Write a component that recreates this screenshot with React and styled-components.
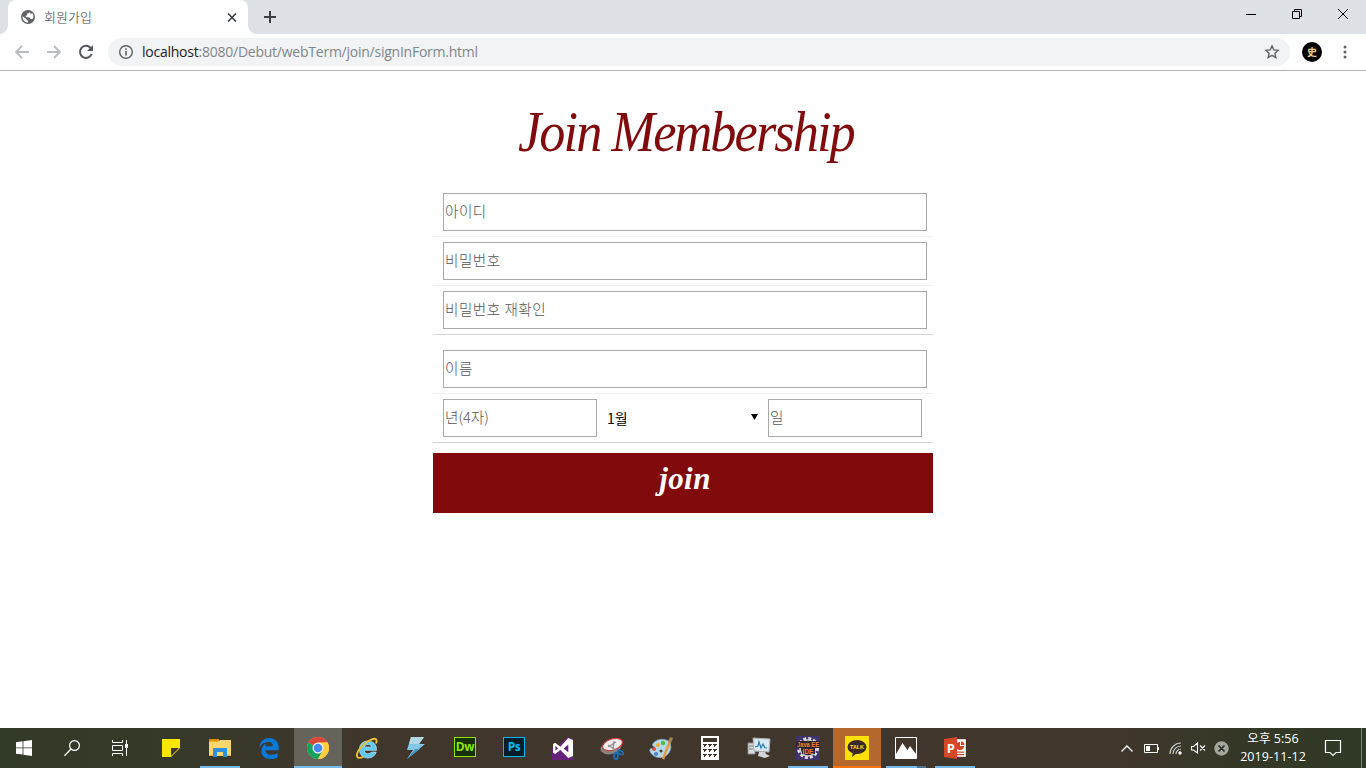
import React from "react";
import styled, { createGlobalStyle } from "styled-components";

const KR = `"Noto Sans", "Noto Sans CJK KR", sans-serif`;

const GlobalStyle = createGlobalStyle`
  * { box-sizing: border-box; }
  body { margin: 0; background: #fff; overflow: hidden; }
`;

const Screen = styled.div`
  width: 1366px;
  height: 768px;
  display: flex;
  flex-direction: column;
  font-family: ${KR};
`;

/* ---------- browser chrome ---------- */
const TabStrip = styled.header`
  height: 34px;
  flex: none;
  display: flex;
  background: #dee1e6;
  padding-left: 8px;
`;
const Tab = styled.div`
  position: relative;
  width: 240px;
  height: 34px;
  background: #fff;
  border-radius: 8px 8px 0 0;
  display: flex;
  align-items: center;
  padding: 0 10px 0 12px;
  &::before, &::after {
    content: "";
    position: absolute;
    bottom: 0;
    width: 8px;
    height: 8px;
  }
  &::before { left: -8px; background: radial-gradient(circle at 0 0, transparent 7.5px, #fff 8px); }
  &::after { right: -8px; background: radial-gradient(circle at 100% 0, transparent 7.5px, #fff 8px); }
`;
const TabTitle = styled.span`
  flex: 1;
  margin-left: 8px;
  font: 300 13px/16px "Noto Sans CJK KR", sans-serif;
  color: #3c4043;
`;
const NewTab = styled.div`
  width: 28px;
  margin-left: 8px;
  display: flex;
  align-items: center;
  justify-content: center;
`;
const WindowButtons = styled.div`
  margin-left: auto;
  display: flex;
  height: 28px;
`;
const WindowButton = styled.div`
  width: 46px;
  display: flex;
  align-items: center;
  justify-content: center;
`;
const Toolbar = styled.div`
  height: 37px;
  flex: none;
  display: flex;
  align-items: center;
  border-bottom: 1px solid #b4b4b4;
  padding: 0 6px;
`;
const ToolButton = styled.div`
  width: 32px;
  height: 28px;
  display: flex;
  align-items: center;
  justify-content: center;
`;
const AddressBar = styled.div`
  width: 1182px;
  height: 28px;
  margin-left: 6px;
  border-radius: 14px;
  background: #f1f3f4;
  display: flex;
  align-items: center;
  padding: 0 10px;
`;
const Url = styled.span`
  flex: 1;
  margin-left: 8px;
  font: 14px/20px "Open Sans", sans-serif;
  letter-spacing: -0.24px;
  color: #80868b;
  b { font-weight: 400; color: #202124; }
`;
const Avatar = styled.div`
  width: 20px;
  height: 20px;
  margin: 0 12px;
  border-radius: 50%;
  background: #000;
  color: #e8d08c;
  font: 700 10px/19px "Noto Sans CJK KR", sans-serif;
  text-align: center;
`;
const Menu = styled.div`
  flex: 1;
  display: flex;
  justify-content: center;
  padding-right: 5px;
`;

/* ---------- sign-up page ---------- */
const Page = styled.main`
  flex: 1;
  display: flex;
  flex-direction: column;
  align-items: center;
`;
const Title = styled.h1`
  height: 117px;
  margin: 0;
  padding-top: 28px;
  font: italic 400 57px/66px "Liberation Serif", serif;
  letter-spacing: -2.1px;
  color: #800a0c;
  white-space: nowrap;
  transform: translateX(3px) scaleX(0.918);
`;
const Form = styled.form`
  width: 500px;
  display: flex;
  flex-direction: column;
  gap: 10px;
`;
const Group = styled.div`
  border-bottom: 1px solid #d5d5d5;
`;
const Row = styled.div`
  display: flex;
  height: ${(p) => (p.$last ? 48 : 49)}px;
  padding: 5px 6px 5px 10px;
  border-bottom: ${(p) => (p.$last ? "none" : "1px solid #f0f0f0")};
`;
const Input = styled.input`
  width: ${(p) => p.$width || 484}px;
  height: 38px;
  padding: 0 1px 3px;
  border: 1px solid #a9a9a9;
  outline: none;
  font: 300 14.6px/20px "Noto Sans CJK KR", sans-serif;
  letter-spacing: 0.5px;
  &::placeholder { color: #555; opacity: 1; letter-spacing: ${(p) => (p.$tight ? 0 : 0.5)}px; }
`;
const Month = styled.div`
  width: 171px;
  padding: 0 10px;
  display: flex;
  align-items: center;
  justify-content: space-between;
  font: 400 14px/20px "Noto Sans CJK KR", sans-serif;
  color: #000;
  svg { margin-bottom: 2px; }
`;
const JoinButton = styled.button`
  height: 60px;
  padding: 0 0 8px 4px;
  border: 0;
  background: #800a0c;
  color: #fff;
  font: italic 700 31px/40px "Liberation Serif", serif;
  letter-spacing: 0.4px;
`;

/* ---------- taskbar ---------- */
const Taskbar = styled.footer`
  height: 40px;
  flex: none;
  display: flex;
  background: linear-gradient(90deg, #323b27 0, #343a28 150px, #3b382b 260px, #40362c 400px, #40362c 1120px, #363827 1230px, #2f3a26 1366px);
`;
const SystemSlots = styled.div`
  display: flex;
  width: 147px;
`;
const Apps = styled.div`
  display: flex;
  gap: 1px;
`;
const Slot = styled.div`
  position: relative;
  width: 48px;
  height: 40px;
  display: flex;
  align-items: center;
  justify-content: center;
  background: ${(p) => p.$bg || "transparent"};
  &::after {
    content: "";
    position: absolute;
    bottom: 0;
    height: 2px;
    left: ${(p) => (p.$bg ? 0 : 4)}px;
    right: ${(p) => (p.$bg ? 0 : 4)}px;
    background: ${(p) => p.$line || "transparent"};
  }
`;
const AdobeTile = styled.span`
  width: 22px;
  height: 20px;
  margin-bottom: 2px;
  border: 1px solid ${(p) => p.$color};
  background: ${(p) => p.$fill};
  color: ${(p) => p.$color};
  font: 700 12px/17px "Open Sans", sans-serif;
  letter-spacing: -0.4px;
  text-align: center;
`;
const Tray = styled.div`
  margin-left: auto;
  display: flex;
  align-items: center;
`;
const TrayItem = styled.div`
  width: ${(p) => p.$width}px;
  display: flex;
  justify-content: center;
`;
const Clock = styled.div`
  width: 78px;
  color: #fff;
  text-align: center;
  font: 400 12.5px/18px "Open Sans", "Noto Sans CJK KR", sans-serif;
  letter-spacing: 0.05px;
  padding-bottom: 1px;
`;
const Notifications = styled.div`
  width: 49px;
  padding: 0 6px 0 0;
  display: flex;
  justify-content: center;
`;
const ShowDesktop = styled.div`
  width: 5px;
  height: 40px;
  border-left: 1px solid #7c8374;
`;

const Svg = ({ w = 24, h = w, box, children, ...rest }) => (
  <svg width={w} height={h} viewBox={box || `0 0 ${w} ${h}`} fill="none" overflow="visible" {...rest}>
    {children}
  </svg>
);

const Globe = () => (
  <Svg w={16}>
    <circle cx="8" cy="8" r="7" fill="#5f6368" />
    <path d="M2.400 7.200 5.600 9.400 6.400 10.600 8.300 12 7.900 13.500C4.800 13.400 2.500 10.900 2.400 7.200ZM9.800 2.600 9.600 3.900 7.300 4.300 7 6.200 5.500 7 6.300 8.200 9.200 8.300 10.600 10 12.600 10.100C13.900 8.300 13.800 5.300 12 3.700L10.900 5.600Z" fill="#fff" />
  </Svg>
);
const Folder = () => (
  <Svg w={22} h={20}>
    <path d="M0 1h10v4H0z" fill="#d99000" />
    <path d="M0 3.500h9L11 2h11v16H0z" fill="#fbd66f" />
    <path d="M4 10h14v9h-4v-5H8v5H4z" fill="#2f91dd" />
    <path d="M0 17h4v1H0zM18 17h4v1h-4z" fill="#e9ad3a" />
  </Svg>
);
const Edge = () => (
  <Svg w={20} h={21}>
    <path d="M.2 9.400C1.200 3.300 5 0 10.200 0 16.100 0 19.800 4.200 19.800 9.900v2.300H6.500c.1 3.200 2.800 4.500 6 4.500 2.200 0 4.200-.6 6-1.600v4.300c-1.900 1-4.300 1.600-7 1.600-5.600 0-9.200-3.200-9.200-7.900 0-3.500 2-6.400 5.200-7.800-.7.8-1 1.800-1.100 2.900h7.400c0-2.600-1.500-4.100-4.200-4.100C6 4.100 2.600 5.900.2 9.400Z" fill="#0a78d7" />
  </Svg>
);
const Chrome = () => (
  <Svg w={22} box="0 0 24 24">
    <circle cx="12" cy="12" r="12" fill="#ffcd46" />
    <path d="M12 12 1.600 6A12 12 0 0 1 22.400 6H12Z" fill="#dc4437" />
    <path d="M12 12 1.600 6A12 12 0 0 0 12 24L17.200 15Z" fill="#18a05e" />
    <path d="M12 6H22.400A12 12 0 0 1 12 24l5.200-9Z" fill="#ffcd46" />
    <circle cx="12" cy="12" r="6" fill="#f4f4f4" />
    <circle cx="12" cy="12" r="4.700" fill="#4587f3" />
  </Svg>
);
const Explorer = () => (
  <Svg w={22} h={23}>
    <path fillRule="evenodd" d="M20.500 13.300H8.200c.2 2.400 1.700 3.400 3.700 3.400 1.600 0 2.700-.6 3.500-1.600h4.800C19 18.900 16 21 12 21c-5 0-8.600-3.400-8.600-8.500S7 4 12 4c5.300 0 8.800 3.700 8.500 9.300ZM8.300 10h7.500c-.3-1.700-1.700-2.600-3.700-2.600S8.700 8.300 8.300 10Z" fill="#61c9ef" stroke="#b5eafb" strokeWidth=".7" />
    <path d="M20 6.500C21.600 2.700 20 .8 15.700 2.400 9 5 1.500 12.500.9 17.800c-.3 3.700 3 3.800 6.500 1.700" stroke="#f2be2c" strokeWidth="1.900" />
  </Svg>
);
const VisualStudio = () => (
  <Svg w={22} h={23}>
    <path d="M15.500 0 22 2.500V23H0V11h4Z" fill="#68217a" />
    <path fillRule="evenodd" d="m1 7 2.200-1.300L8.400 9.800 16.300 1 21 3v16l-4.700 2-7.900-8.100-5.200 4L1 15.700Zm2.400 2v4.800l2.600-2.500Zm12.900-1.500-4.700 3.900 4.700 3.900Z" fill="#fff" />
  </Svg>
);
const Snip = () => (
  <Svg w={24} h={23}>
    <ellipse cx="11" cy="10.500" rx="10.700" ry="6.500" transform="rotate(-15 11 10.500)" fill="#858481" />
    <ellipse cx="12.500" cy="7.500" rx="10.300" ry="5.500" transform="rotate(-18 12.500 7.500)" fill="#f3eeee" stroke="#ce4140" strokeWidth="1.200" />
    <path d="m8 10 8-5M14 4l-1 8M8 8l8 5" stroke="#8b8d8f" strokeWidth="1.200" />
    <ellipse cx="16" cy="19" rx="2" ry="3" stroke="#1970bd" strokeWidth="1.800" />
    <ellipse cx="20.500" cy="15.500" rx="3" ry="1.700" transform="rotate(25 20.500 15.500)" stroke="#1970bd" strokeWidth="1.700" />
  </Svg>
);
const Paint = () => (
  <Svg w={24} h={24}>
    <path d="M3 9C6 3 15 1.500 20 5.500c4 4.500 1.500 12-4 15-6 3-13 0-15-5-1-2 .5-3.500 2-3 3 1 4-1 0-3.500Z" fill="#b4d9ec" stroke="#6f9ab1" strokeWidth=".7" />
    <circle cx="5" cy="13" r="2" fill="#e54f3d" /><circle cx="9" cy="9" r="2" fill="#f3ae22" />
    <circle cx="14" cy="7" r="2.200" fill="#54b943" /><circle cx="7" cy="18" r="2" fill="#4385d0" />
    <circle cx="12" cy="15" r="1.500" fill="#463c31" />
    <path d="m21 5-7 18" stroke="#e69a40" strokeWidth="2.500" /><path d="m19 5 2-4 3 1-2 5Z" fill="#a58056" />
  </Svg>
);
const Calculator = () => (
  <Svg w={18} h={24}>
    <path d="M0 0h18v24H0z" fill="#fff" /><path d="M2 2h14v4H2z" fill="#40362c" />
    {[9, 14, 19].map((y) => [2, 7, 12].map((x) => <path key={`${x}-${y}`} d={`M${x} ${y - 1}h4v1h-1v1h-1v1h-1v-2h-1z`} fill="#40362c" />))}
  </Svg>
);
const Monitor = () => (
  <Svg w={24} h={22}>
    <path d="M1 6h7v11H1z" fill="#d8dcdf" stroke="#858b90" /><path d="M2 9h4M2 12h4" stroke="#777" />
    <path d="m6 1 17 1-1 13-15-1Z" fill="#dce4e9" stroke="#a9b1b6" /><path d="m8 3 13 1-1 9L9 12Z" fill="#d4edf9" />
    <path d="m8 10 3-1 1-4 2 6 2-4 2 4h2" stroke="#2678b6" strokeWidth="1.200" />
    <path d="m12 15-1 4 7 2 5-2-4-2-1-2Z" fill="#d2d5d7" />
  </Svg>
);
const JavaIde = () => (
  <Svg w={24} h={24}>
    <path d="M0 0h24v24H0z" fill="#41346d" />
    <circle cx="12" cy="12" r="9.500" stroke="#ddd" strokeWidth="3" strokeDasharray="3 1.970" />
    <circle cx="12" cy="12" r="8" fill="#29232b" stroke="#c9c9cd" strokeWidth="1.500" />
    <path d="M0 5h24v7H0zM6 12h13v6H6z" fill="#2d2435" />
    <text x="12" y="11" textAnchor="middle" textLength="22" lengthAdjust="spacingAndGlyphs" fontFamily="Liberation Sans" fontWeight="700" fontSize="7" fill="#f58220">Java EE</text>
    <text x="12" y="18" textAnchor="middle" textLength="11" lengthAdjust="spacingAndGlyphs" fontFamily="Liberation Sans" fontWeight="700" fontSize="7.500" fill="#f58220">IDE</text>
  </Svg>
);
const Talk = () => (
  <Svg w={24} h={24}>
    <path d="M0 0h24v24H0z" fill="#ffe100" /><ellipse cx="12" cy="11" rx="9.500" ry="7" fill="#3a2929" />
    <path d="m8 16-1 5 5-4Z" fill="#3a2929" />
    <text x="12" y="13.300" textAnchor="middle" textLength="14" lengthAdjust="spacingAndGlyphs" fontFamily="Liberation Sans" fontWeight="700" fontSize="6" fill="#ffe100">TALK</text>
  </Svg>
);
const PowerPoint = () => (
  <Svg w={22} h={22}>
    <path d="M11 2.500h10.500v17H11z" fill="#fff" stroke="#e9d6cf" />
    <path d="M16 5a4 4 0 1 0 4 4h-4Z" fill="#d04525" />
    <path d="M17 4.500a3.500 3.500 0 0 1 3.500 3.500H17zM13 14.500h7v1.200h-7zm0 2.500h7v1.200h-7z" fill="#d04525" />
    <path d="m0 2 13-2v22L0 20Z" fill="#d44727" />
    <text x="2.800" y="15.500" fontFamily="Open Sans" fontWeight="700" fontSize="13" fill="#fff">P</text>
  </Svg>
);

const BLUE = "#76b9ed";

export default function App() {
  return (
    <Screen>
      <GlobalStyle />
      <TabStrip>
        <Tab>
          <Globe />
          <TabTitle>회원가입</TabTitle>
          <Svg w={12}><path d="m2 2.500 8 8m0-8-8 8" stroke="#3c4043" strokeWidth="1.700" /></Svg>
        </Tab>
        <NewTab><Svg w={12}><path d="M6 0v12M0 6h12" stroke="#3c4043" strokeWidth="2" /></Svg></NewTab>
        <WindowButtons>
          <WindowButton><Svg w={10}><path d="M0 5.500h10" stroke="#000" /></Svg></WindowButton>
          <WindowButton><Svg w={10}><path d="M.5 2.500h7v7h-7zM2.500 2.500v-2h7v7h-2" stroke="#000" /></Svg></WindowButton>
          <WindowButton><Svg w={10}><path d="m0 0 10 10M10 0 0 10" stroke="#000" /></Svg></WindowButton>
        </WindowButtons>
      </TabStrip>
      <Toolbar>
        <ToolButton><Svg w={16}><path d="M15 8H2m6-6L2 8l6 6" stroke="#b9bbbe" strokeWidth="1.800" /></Svg></ToolButton>
        <ToolButton><Svg w={16}><path d="M1 8h13M8 2l6 6-6 6" stroke="#b9bbbe" strokeWidth="1.800" /></Svg></ToolButton>
        <ToolButton><Svg w={16}><path d="M13.600 10a6 6 0 1 1-1.200-6.200L14 5.500" stroke="#54585d" strokeWidth="2" /><path d="M15 1v6H9Z" fill="#54585d" /></Svg></ToolButton>
        <AddressBar>
          <Svg w={16}><circle cx="8" cy="8" r="6.300" stroke="#5f6368" strokeWidth="1.400" /><path d="M8 7v4.500M8 4.200v1.600" stroke="#5f6368" strokeWidth="1.600" /></Svg>
          <Url><b>localhost</b>:8080/Debut/webTerm/join/signInForm.html</Url>
          <Svg w={16}><path d="m8 1.900 1.800 4 4.300.4-3.200 2.900.9 4.300L8 11.300l-3.800 2.200.9-4.300-3.200-2.900 4.300-.4Z" stroke="#5f6368" strokeWidth="1.400" /></Svg>
        </AddressBar>
        <Avatar>史</Avatar>
        <Menu><Svg w={4} h={14}><g fill="#5f6368"><circle cx="2" cy="2" r="1.500" /><circle cx="2" cy="7" r="1.500" /><circle cx="2" cy="12" r="1.500" /></g></Svg></Menu>
      </Toolbar>

      <Page>
        <Title>Join Membership</Title>
        <Form>
          <Group>
            <Row><Input placeholder="아이디" /></Row>
            <Row><Input placeholder="비밀번호" /></Row>
            <Row $last><Input placeholder="비밀번호 재확인" /></Row>
          </Group>
          <Group>
            <Row><Input placeholder="이름" /></Row>
            <Row $last>
              <Input $width={154} $tight placeholder="년(4자)" />
              <Month>1월<Svg w={7} h={6}><path d="M0 0h7L3.500 6Z" fill="#000" /></Svg></Month>
              <Input $width={154} placeholder="일" />
            </Row>
          </Group>
          <JoinButton type="button">join</JoinButton>
        </Form>
      </Page>

      <Taskbar>
        <SystemSlots>
          <Slot><Svg w={16}><path d="m0 2.200 6.600-.9v6.200H0zM7.400 1.200 16 0v7.500H7.400zM0 8.300h6.600v6.300L0 13.700zM7.400 8.300H16V16l-8.600-1.200z" fill="#fff" /></Svg></Slot>
          <Slot><Svg w={16}><circle cx="10.500" cy="5.500" r="4.900" stroke="#fff" strokeWidth="1.200" /><path d="m7 9-6.500 6.700" stroke="#fff" strokeWidth="1.300" /></Svg></Slot>
          <Slot><Svg w={16}><path d="M.5 0v2.500h10V0M.5 16v-2.500h10V16M.5 5.500h10v5H.5zM14.500 0v16" stroke="#fff" /><path d="M13 4h3v4h-3z" fill="#fff" /></Svg></Slot>
        </SystemSlots>
        <Apps>
          <Slot><Svg w={18}><path d="M0 0h18v18H0z" fill="#ffe600" /><path d="M9 9h9v9H9z" fill="#3a382b" /><path d="M9 18v-1l8-8h1L9 18Z" fill="#ffe600" /></Svg></Slot>
          <Slot $line={BLUE}><Folder /></Slot>
          <Slot><Edge /></Slot>
          <Slot $bg="#66645a" $line={BLUE}><Chrome /></Slot>
          <Slot><Explorer /></Slot>
          <Slot><Svg w={20} h={22}><path d="M5 0h13l-5 7h6L1 22l6-9H1Z" fill="#83c6e6" /><path d="M5 0h13l-5 7H3Z" fill="#b2d8e8" /><path d="m1 22 8-10h5Z" fill="#4899ca" /></Svg></Slot>
          <Slot><AdobeTile $color="#8de500" $fill="#17300b">Dw</AdobeTile></Slot>
          <Slot><AdobeTile $color="#00b9ee" $fill="#061d29">Ps</AdobeTile></Slot>
          <Slot><VisualStudio /></Slot>
          <Slot><Snip /></Slot>
          <Slot><Paint /></Slot>
          <Slot><Calculator /></Slot>
          <Slot><Monitor /></Slot>
          <Slot $line={BLUE}><JavaIde /></Slot>
          <Slot $bg="#b4682d" $line="#ff7300"><Talk /></Slot>
          <Slot $line={`linear-gradient(90deg, ${BLUE} 31px, #4d7391 31px)`}><Svg w={22}><path d="M.5.5h21v21H.5z" stroke="#fff" /><path d="M1 17 7.500 6l5 7 2.500-4 6 8v4H1Z" fill="#fff" /></Svg></Slot>
          <Slot $line={BLUE}><PowerPoint /></Slot>
        </Apps>
        <Tray>
          <TrayItem $width={24}><Svg w={12} h={7}><path d="m.5 6.500 5.500-5.500 5.500 5.500" stroke="#fff" strokeWidth="1.300" /></Svg></TrayItem>
          <TrayItem $width={25}><Svg w={15} h={9}><path d="M.5.5h13v8H.5zM14.500 3v3" stroke="#fff" /><path d="M2 2h4v5H2z" fill="#fff" /></Svg></TrayItem>
          <TrayItem $width={23}><Svg w={13} h={13}><path d="M1 12A11 11 0 0 1 12 1M4 12a8 8 0 0 1 8-8M7 12a5 5 0 0 1 5-5" stroke="#c7c8c3" strokeWidth="1.200" /><circle cx="11" cy="11" r="1.700" fill="#fff" /></Svg></TrayItem>
          <TrayItem $width={22}><Svg w={15} h={12}><path d="M.5 4.500h2L6.500 1v10L2.500 8h-2zM9 3.500l5 5m0-5-5 5" stroke="#fff" strokeWidth="1.100" /></Svg></TrayItem>
          <TrayItem $width={25}><Svg w={15}><circle cx="7.500" cy="7.500" r="7.200" fill="#a5a6a0" /><path d="m4.500 4.500 6 6m0-6-6 6" stroke="#292d23" strokeWidth="1.700" /></Svg></TrayItem>
          <Clock>오후 5:56<br />2019-11-12</Clock>
          <Notifications><Svg w={17} h={17}><path d="M.5.5h15v12H11l-3 3-3-3H.5z" stroke="#fff" strokeWidth="1.200" /></Svg></Notifications>
          <ShowDesktop />
        </Tray>
      </Taskbar>
    </Screen>
  );
}
